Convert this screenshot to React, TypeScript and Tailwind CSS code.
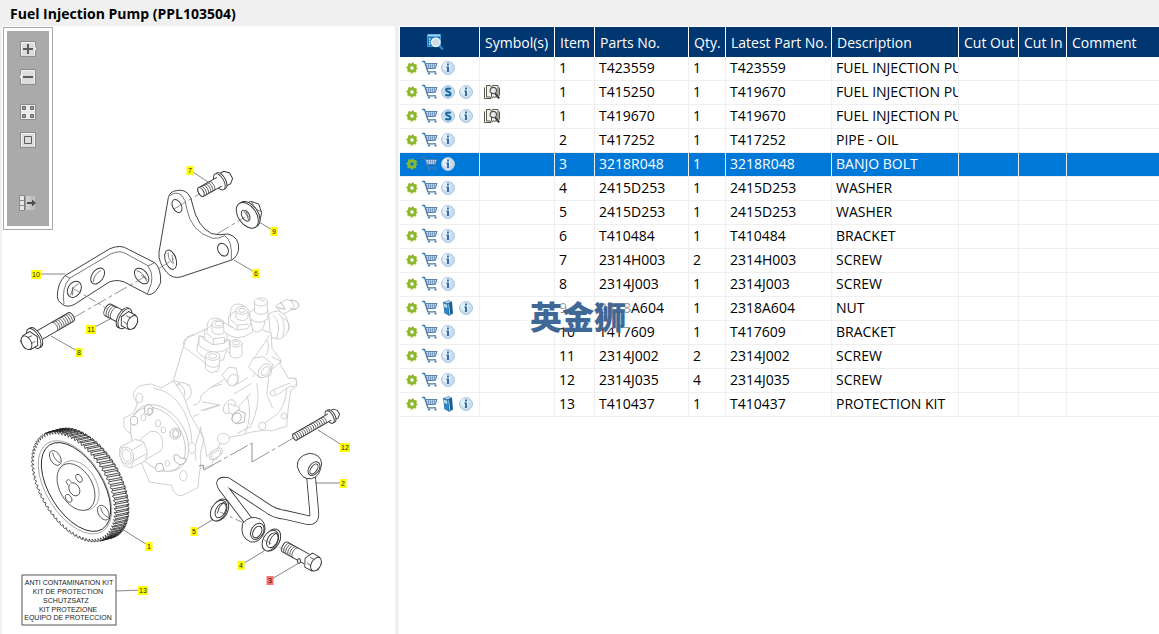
import { useState } from 'react'

interface Part {
  id: number
  item: string
  partNo: string
  qty: string
  latest: string
  description: string
  superseded?: boolean
  kit?: boolean
}

const parts: Part[] = [
  { id: 1, item: '1', partNo: 'T423559', qty: '1', latest: 'T423559', description: 'FUEL INJECTION PUMP' },
  { id: 2, item: '1', partNo: 'T415250', qty: '1', latest: 'T419670', description: 'FUEL INJECTION PUMP', superseded: true },
  { id: 3, item: '1', partNo: 'T419670', qty: '1', latest: 'T419670', description: 'FUEL INJECTION PUMP', superseded: true },
  { id: 4, item: '2', partNo: 'T417252', qty: '1', latest: 'T417252', description: 'PIPE - OIL' },
  { id: 5, item: '3', partNo: '3218R048', qty: '1', latest: '3218R048', description: 'BANJO BOLT' },
  { id: 6, item: '4', partNo: '2415D253', qty: '1', latest: '2415D253', description: 'WASHER' },
  { id: 7, item: '5', partNo: '2415D253', qty: '1', latest: '2415D253', description: 'WASHER' },
  { id: 8, item: '6', partNo: 'T410484', qty: '1', latest: 'T410484', description: 'BRACKET' },
  { id: 9, item: '7', partNo: '2314H003', qty: '2', latest: '2314H003', description: 'SCREW' },
  { id: 10, item: '8', partNo: '2314J003', qty: '1', latest: '2314J003', description: 'SCREW' },
  { id: 11, item: '9', partNo: '2318A604', qty: '1', latest: '2318A604', description: 'NUT', kit: true },
  { id: 12, item: '10', partNo: 'T417609', qty: '1', latest: 'T417609', description: 'BRACKET' },
  { id: 13, item: '11', partNo: '2314J002', qty: '2', latest: '2314J002', description: 'SCREW' },
  { id: 14, item: '12', partNo: '2314J035', qty: '4', latest: '2314J035', description: 'SCREW' },
  { id: 15, item: '13', partNo: 'T410437', qty: '1', latest: 'T410437', description: 'PROTECTION KIT', kit: true },
]

// [item, label centre x, y, leader line end x, y]
const callouts: [string, number, number, number, number][] = [
  ['7', 190, 170, 208, 182],
  ['9', 274, 231, 259, 222],
  ['6', 256, 273, 234, 260],
  ['10', 36, 274, 65, 274],
  ['8', 79, 352, 51, 336],
  ['11', 91, 329, 110, 319],
  ['1', 149, 546, 122, 529],
  ['12', 345, 447, 318, 430],
  ['2', 343, 483, 315, 483],
  ['5', 194, 531, 212, 520],
  ['4', 241, 565, 264, 551],
  ['3', 270, 580, 299, 563],
  ['13', 143, 590, 116, 591],
]

function GearIcon() {
  return (
    <svg width="16" height="16" viewBox="0 0 16 16" fill="none" stroke="#8bb92c">
      <circle cx="8" cy="8" r="3.2" strokeWidth="2.8" />
      <circle cx="8" cy="8" r="4.8" strokeWidth="1.6" strokeDasharray="2.2 1.57" strokeDashoffset="1" />
    </svg>
  )
}

function CartIcon() {
  return (
    <svg width="18" height="16" viewBox="0 0 18 16" fill="none" stroke="#4a78ad">
      <path d="M1 1.5h2.5l3.4 10.300H15" strokeWidth="1.3" />
      <path d="M4.500 3.500H16L14.300 8.500H6.200z" fill="#dce7f2" strokeWidth=".9" />
      <path d="M7.500 4v4.500M9.500 4v4.500M11.500 4v4.500M13.500 4v4.500M5 5.200h10.500M6 7h8.700" strokeWidth=".5" />
      <circle cx="8" cy="13.600" r="1.100" fill="#4a78ad" stroke="none" />
      <circle cx="14.500" cy="13.600" r="1.100" fill="#4a78ad" stroke="none" />
    </svg>
  )
}

function InfoIcon() {
  return (
    <svg width="16" height="16" viewBox="0 0 16 16">
      <circle cx="8" cy="8" r="6.5" fill="#c8dcee" stroke="#adc8e0" />
      <circle cx="6.5" cy="6.5" r="4" fill="#e4eff8" />
      <path d="M7 3.500h2v2H7zM6.300 6.600H9v5.400H7V7.800h-.7z" fill="#3c6ca6" />
    </svg>
  )
}

function SupersededIcon() {
  return (
    <svg width="16" height="16" viewBox="0 0 16 16">
      <circle cx="8" cy="8" r="6.5" fill="#c8dcee" stroke="#adc8e0" />
      <path
        d="M10.6 5.3C9.6 4.3 6 4 6 6.1c0 2 4.5 1.400 4.500 3.700 0 2.200-3.700 2-5 .7"
        fill="none"
        stroke="#17679f"
        strokeWidth="2"
      />
    </svg>
  )
}

function KitIcon() {
  return (
    <svg width="16" height="16" viewBox="0 0 16 16">
      <path d="M3 2.200 8.500.3l3.500 1.500 1 11.700L9.500 15.700 8 15z" fill="#125f9a" />
      <path d="M3.200 2.600 7.600 4 9 15.500 4.300 13.200z" fill="#2e86c1" />
      <path d="M4 3.800l3 .9.300 3.300-3-.9z" fill="#bfe0f3" />
      <path d="M3.600 2.100 8.500.7l2.800 1L7.800 3.400z" fill="#a9d5ee" />
      <path d="M8.600 4.300 9.900 14.800" stroke="#d8edf8" strokeWidth=".8" />
    </svg>
  )
}

function CatalogueIcon() {
  return (
    <svg width="16" height="16" viewBox="0 0 16 16" fill="none" stroke="#55534a">
      <path d="M2.500 1.500H6l1.500 1 1.500-1h5v11.500H9l-1.500 1-1.500-1H2.500z" fill="#f6f5ee" />
      <path d="M.5 3.500v11h6.500M15.500 3.500v8M7.500 3v10" />
      <circle cx="9.300" cy="6.500" r="3.200" fill="#e6ebef" strokeWidth="1.200" />
      <path d="m11.200 9.300 4 5.200" strokeWidth="2" stroke="#3a3932" />
    </svg>
  )
}

function SearchListIcon() {
  return (
    <svg width="17" height="16" viewBox="0 0 17 16" fill="none">
      <path d="M.5.5h13v12H.5z" fill="#1577b8" stroke="#3f9fd6" />
      <path d="M1 1.500h12" stroke="#9bd3f0" strokeWidth="2" />
      <path d="M2 5h1.500M2 7.500h1.500M2 10h1.500" stroke="#d7eefa" strokeWidth="1.500" />
      <path d="m11.500 11 4.500 4.500" stroke="#2f8bc7" strokeWidth="2.200" />
      <circle cx="8.800" cy="8.300" r="4.200" fill="#cfdbe4" stroke="#eef5fa" strokeWidth="1.300" />
    </svg>
  )
}

function IconButton({ label, children }: { label: string; children: React.ReactNode }) {
  return (
    <button type="button" aria-label={label} className="flex h-4 w-[18px] shrink-0 items-center justify-center">
      {children}
    </button>
  )
}

function ToolButton({ label, className = '', children }: { label: string; className?: string; children: React.ReactNode }) {
  return (
    <button type="button" aria-label={label} className={`flex h-4 w-5 items-center justify-center ${className}`}>
      <svg width="20" height="16" viewBox="0 0 20 16" fill="none">
        {children}
      </svg>
    </button>
  )
}

function Toolbar() {
  return (
    <div className="absolute top-px left-px border border-[#a8a8a8] bg-white p-[3px]">
      <div className="flex flex-col items-center gap-3 bg-[#aaaaaa] px-[11px] pt-[10px] pb-[15px]">
        <ToolButton label="Zoom in">
          <path d="M2.5.5h15v5l2 2.500-2 2v5.500h-15z" fill="#dcdcdc" stroke="#8c8c8c" />
          <path d="M3.500 14V1.500H16.500V14" stroke="#f2f2f2" />
          <path d="M5 8h10M10 3v10" stroke="#5c5c5c" strokeWidth="2" />
        </ToolButton>
        <ToolButton label="Zoom out">
          <path d="M2.500.5h15v15h-15v-5.500l-2-2 2-2.500z" fill="#dcdcdc" stroke="#8c8c8c" />
          <path d="M3.500 14V1.500H16.500V14" stroke="#f2f2f2" />
          <path d="M5 8h10" stroke="#5c5c5c" strokeWidth="2" />
        </ToolButton>
        <ToolButton label="Fit to window" className="mt-[7px]">
          <path d="M2.500.5h15v15h-15z" fill="#ececec" stroke="#8c8c8c" />
          <path d="M4.500 2.500h3v3h-3zM12.500 2.500h3v3h-3zM4.500 10.500h3v3h-3zM12.500 10.500h3v3h-3z" fill="#999" stroke="#6a6a6a" />
        </ToolButton>
        <ToolButton label="Actual size">
          <path d="M2.500.5h15v15h-15z" fill="#dcdcdc" stroke="#8c8c8c" />
          <path d="M3.500 14V1.500H16.500V14" stroke="#f2f2f2" />
          <path d="M6.500 4.500h7v7h-7z" stroke="#5c5c5c" />
        </ToolButton>
        <ToolButton label="Show list" className="mt-[35px]">
          <path d="M7 1h10v14H7z" fill="#bfbfbf" />
          <path d="M7 1h5v14H7z" fill="#cccccc" />
          <path d="M1.500.5h5v15h-5zM1.500 5.500h5M1.500 10.500h5" fill="#e6e6e6" stroke="#8c8c8c" />
          <path d="M7 1v14" stroke="#6a6a6a" />
          <path d="M9 8h6" stroke="#4c4c4c" strokeWidth="2" />
          <path d="M14 4.500 18 8l-4 3.500z" fill="#4c4c4c" />
        </ToolButton>
      </div>
    </div>
  )
}

interface BoltProps {
  x: number
  y: number
  angle: number
  length: number
  width: number
  threads: number
  head: number
  flange?: number
  far?: boolean
}

// Local x axis runs from the tip of the shank to the head
function Bolt({ x, y, angle, length, width, threads, head, flange = 0, far = false }: BoltProps) {
  const r = width / 2
  const shank = (
    <g key="shank">
      <path d={`M0 ${-r}H${length}V${r}H0A${r * 0.5} ${r} 0 0 1 0 ${-r}z`} stroke="none" />
      <path d={`M${length} ${-r}H0A${r * 0.5} ${r} 0 0 0 0 ${r}H${length}`} />
      {Array.from({ length: threads }).map((_, i) => (
        <path
          key={i}
          d={`M${(i + 1) * 2.4} ${-r}a${r * 0.5} ${r} 0 0 ${far ? 1 : 0} 0 ${width}`}
          fill="none"
          strokeWidth=".7"
        />
      ))}
      {far && <ellipse cx="0" cy="0" rx={r * 0.5} ry={r} />}
    </g>
  )
  const collar = flange > 0 && (
    <g key="collar">
      <ellipse cx={length + (far ? 2 : 0)} cy="0" rx={flange * 0.5} ry={flange} />
      <ellipse cx={length + (far ? 0 : 2)} cy="0" rx={flange * 0.5} ry={flange} />
    </g>
  )
  const h = head
  const cap = (
    <g key="cap" transform={`translate(${length + 2} 0)`}>
      <path d={`M0 ${-h}L${h} ${-h}L${h * 1.6} ${-h * 0.4}V${h * 0.5}L${h} ${h}H0L${-h * 0.5} 0z`} />
      {!far && <ellipse cx={h * 1.05} cy="0" rx={h * 0.58} ry={h * 0.92} />}
      <path d={`M0 ${-h * 0.4}L${h * 0.6} ${-h * 0.4}M0 ${h * 0.4}L${h * 0.6} ${h * 0.5}`} fill="none" strokeWidth=".7" />
    </g>
  )
  return (
    <g transform={`translate(${x} ${y}) rotate(${angle})`} fill="#fff" stroke="#333" strokeWidth=".9">
      {far ? [cap, collar, shank] : [shank, collar, cap]}
    </g>
  )
}

const TEETH = 76

// Point on the tilted gear rim; scale 1 is the tooth tip
function rim(t: number, scale: number, dx = 0, dy = 0): string {
  const a = 182 * scale * Math.cos(t)
  const b = 102 * scale * Math.sin(t)
  const c = Math.cos((60 * Math.PI) / 180)
  const s = Math.sin((60 * Math.PI) / 180)
  return `${(192 + dx + a * c - b * s).toFixed(1)} ${(230 + dy + a * s + b * c).toFixed(1)}`
}

function GearWheel() {
  const step = (2 * Math.PI) / TEETH
  const outline = (dx: number, dy: number) =>
    'M' +
    Array.from({ length: TEETH })
      .map((_, i) => `${rim(i * step, 0.95, dx, dy)}L${rim((i + 0.3) * step, 1, dx, dy)}L${rim((i + 0.7) * step, 1, dx, dy)}`)
      .join('L') +
    'z'
  const flanks = Array.from({ length: TEETH / 2 + 2 })
    .map((_, i) => i + TEETH / 2)
    .map((i) => `M${rim((i + 0.3) * step, 1)}L${rim((i + 0.5) * step, 1, 38, -10)}M${rim((i + 0.7) * step, 1)}L${rim((i + 0.9) * step, 1, 38, -10)}`)
    .join('')
  return (
    <g transform="translate(10 410) scale(.3333)" fill="#fff" stroke="#222" strokeWidth="2.2">
      <path d={outline(38, -10)} />
      <path d={outline(0, 0)} />
      <path d={flanks} strokeWidth="2.4" />
      <g strokeWidth="2">
        <ellipse cx="195" cy="232" rx="156" ry="86" transform="rotate(58 195 232)" stroke="#888" />
        <ellipse cx="198" cy="231" rx="149" ry="80" transform="rotate(58 198 231)" strokeWidth="2.6" />
        <ellipse cx="207" cy="226" rx="80" ry="52" transform="rotate(60 207 226)" stroke="#888" />
        <ellipse cx="198" cy="231" rx="76" ry="49" transform="rotate(60 198 231)" />
        <ellipse cx="136" cy="144" rx="24" ry="15" transform="rotate(60 136 144)" />
        <path d="M128 128q4 22 22 30" fill="none" />
        <ellipse cx="280" cy="308" rx="24" ry="15" transform="rotate(60 280 308)" />
        <path d="M272 292q4 22 22 30" fill="none" />
        <ellipse cx="207" cy="205" rx="13" ry="8" transform="rotate(60 207 205)" />
        <ellipse cx="176" cy="265" rx="13" ry="8" transform="rotate(60 176 265)" />
        <ellipse cx="193" cy="238" rx="21" ry="15" transform="rotate(60 193 238)" />
        <path d="M174 226l-6-12 8-6 10 10" />
      </g>
    </g>
  )
}

function PumpBody() {
  return (
    <g transform="translate(110 290) scale(.3333)" fill="#fff" stroke="#c6c6c6" strokeWidth="2.5">
      {/* rear outlet */}
      <path d="M476 72q35-22 52 8l10 30q-8 30-30 38l-26-6z" />
      <path d="M488 75q28 20 12 70M505 70q26 22 14 70M520 84l15 12 2 28" fill="none" />
      <path d="M496 48l34-20 16 6 8 22-36 16z" />
      <path d="M540 30l20 4 8 14-10 10-18-2M500 52l24 6M512 36l14 22" fill="none" stroke="#aaa" />
      {/* main casting */}
      <path d="M190 272L222 165q5-25 30-30l40-20 150 0 42 14 2 46 26 34-2 14 26 42 22 0 2 24-18 12-8 62-4 46-46 14-14-3-45 6-30 9-60 11-30 80-60 18-60-30-40-160z" />
      <path d="M222 170l100 78M222 165q-6-10 10-24l20-8M190 272l50 14M250 345q22 0 24-30l28-22 40-24M276 336l52 8-56 18M280 362l50-16M302 292l34-10" fill="none" />
      <path d="M484 200l30 14-36 30-8 70 18 40M488 300l60-24M496 318l54-36M530 296q-2 50-30 78l-40 28M440 280q14 60-18 130l-40 20M412 318q16 60-6 112" fill="none" />
      <path d="M370 290l44-28M372 312l52-32M386 350l36-40M430 260q20-30 6-60l44-66M470 150q12 20-2 46" fill="none" />
      <path d="M538 266q20-6 22 10 0 14-18 14" />
      <circle cx="522" cy="378" r="9" />
      <circle cx="457" cy="408" r="11" />
      <circle cx="488" cy="310" r="8" />
      {/* outlet valves */}
      <path d="M268 138l-8 44q30 40 80 28l20-60z" />
      <path d="M268 136q44 44 90 14v24q-46 30-92-8z" />
      <path d="M284 122v26l24 16 34-4 10-18-6-30-34-14z" />
      <path d="M288 128l22 18 34-4M310 146v18M344 142v18" fill="none" />
      <path d="M292 124q-6-38 22-40 28 0 32 22" fill="none" />
      <path d="M306 104v22q20 16 38 0v-22" />
      <ellipse cx="325" cy="102" rx="20" ry="12" />
      <ellipse cx="326" cy="101" rx="12" ry="7" />
      <path d="M340 96q44 38 88 4v26q-44 34-86 0z" />
      <path d="M356 78v26l24 16 32-4 12-18-6-26-34-14z" />
      <path d="M360 88l22 18 34-4M382 106v14" fill="none" />
      <path d="M362 84q-6-40 18-42 30 0 34 22" fill="none" />
      <path d="M378 62v22q20 16 36 0V62" />
      <ellipse cx="396" cy="61" rx="19" ry="12" />
      <ellipse cx="396" cy="61" rx="11" ry="6" />
      <path d="M422 90q4 40 20 36 22-6 22-32z" />
      <path d="M420 66v20q26 22 54 0V60q-26-20-54 6z" />
      <path d="M434 34v32q18 14 38 0V36" />
      <ellipse cx="453" cy="36" rx="20" ry="12" />
      <path d="M446 28l18 6" />
      {/* small connectors */}
      <path d="M286 200v36l16 12 24-6 4-40z" />
      <ellipse cx="308" cy="198" rx="21" ry="13" />
      <ellipse cx="308" cy="198" rx="12" ry="7" />
      <path d="M286 222q22 18 42 4M352 184q22 22 42 2" fill="none" />
      <path d="M360 160v38q18 14 36-2v-36" />
      <ellipse cx="378" cy="160" rx="18" ry="11" />
      <ellipse cx="378" cy="159" rx="10" ry="6" />
      <path d="M336 256l20-24 22 2 6 26 0 20-26 4z" />
      <ellipse cx="368" cy="270" rx="14" ry="18" transform="rotate(40 368 270)" />
      <path d="M416 232l14-28 30-4 28 22-6 34-32 8z" />
      <ellipse cx="464" cy="242" rx="16" ry="24" transform="rotate(40 464 242)" />
      <ellipse cx="466" cy="243" rx="9" ry="16" transform="rotate(40 466 243)" />
      <ellipse cx="358" cy="350" rx="15" ry="23" transform="rotate(35 358 350)" />
      <path d="M354 340l34 12v26l-30-8z" />
      <path d="M368 374l16-14 22 10-4 26-20 6-16-12z" stroke="#aaa" />
      <ellipse cx="380" cy="384" rx="13" ry="16" transform="rotate(30 380 384)" stroke="#aaa" />
      <circle cx="216" cy="306" r="28" />
      <ellipse cx="206" cy="308" rx="18" ry="24" />
      {/* mounting flange */}
      <path d="M70 318q0-24 26-32l28-4 30 12 36-22 30 44 22 60 40 70-10 40 0 40-6 40 -2 26-46 24q-24 6-34-30l-66-10L78 480 62 430Q36 420 42 384l28-14 12-28z" />
      <path d="M130 294q60 10 92 70 30 60 22 120M274 410l-20 62 4 40M250 380l18-8" fill="none" />
      <ellipse cx="88" cy="324" rx="10" ry="14" />
      <ellipse cx="220" cy="557" rx="11" ry="15" />
      <ellipse cx="246" cy="474" rx="11" ry="16" />
      <ellipse cx="340" cy="446" rx="18" ry="16" />
      <path d="M270 410q20 70 20 90l20-20" fill="none" />
      <ellipse cx="318" cy="492" rx="12" ry="24" transform="rotate(50 318 492)" />
      <ellipse cx="318" cy="494" rx="8" ry="18" transform="rotate(50 318 494)" />
      <ellipse cx="150" cy="444" rx="108" ry="76" transform="rotate(58 150 444)" />
      <ellipse cx="144" cy="448" rx="104" ry="72" transform="rotate(58 144 448)" />
      <ellipse cx="100" cy="382" rx="7" ry="11" />
      <ellipse cx="144" cy="400" rx="8" ry="11" />
      <ellipse cx="160" cy="420" rx="7" ry="9" />
      <ellipse cx="172" cy="520" rx="7" ry="9" />
      <g stroke="#aaa">
        <ellipse cx="116" cy="360" rx="13" ry="16" />
        <ellipse cx="120" cy="364" rx="7" ry="10" />
        <ellipse cx="72" cy="392" rx="11" ry="13" />
        <ellipse cx="196" cy="431" rx="16" ry="16" />
        <ellipse cx="197" cy="431" rx="9" ry="11" />
        <path d="M192 496q14-6 18 8l16 2q4 14-16 18-20-6-18-28zM140 522l16-2 6 20-18 6-8-10z" />
      </g>
      {/* drive shaft */}
      <path d="M92 446l30-22q30-4 36 30 2 28-14 34l-46 26z" />
      <path d="M30 472l46-24 26 8 10 32-6 24-42 22-20-6q-20-30-14-56z" />
      <path d="M64 482l38-24M72 512l40-22M30 472l34 10 8 30-10 20" fill="none" />
      <ellipse cx="50" cy="497" rx="20" ry="26" transform="rotate(-18 50 497)" />
      <ellipse cx="50" cy="497" rx="13" ry="19" transform="rotate(-18 50 497)" />
    </g>
  )
}

function Plates() {
  return (
    <g fill="#fff" stroke="#333" strokeWidth="2.8">
      <g transform="translate(140 155) scale(.3333)">
        <path d="M85 128Q90 108 110 107Q130 102 144 116Q155 128 158 150Q172 215 215 236Q240 242 264 237Q298 246 296 282Q292 306 275 315L122 366Q98 372 80 352Q54 322 57 292Z" />
        <path d="M90 122q18-14 34-2 14 14 16 40 12 70 78 90 18 2 36-8 24 14 20 72" fill="none" strokeWidth="2" />
        <ellipse cx="111" cy="153" rx="13" ry="21" transform="rotate(-28 111 153)" />
        <ellipse cx="249" cy="284" rx="15" ry="20" transform="rotate(-28 249 284)" />
        <ellipse cx="92" cy="314" rx="16" ry="30" transform="rotate(-18 92 314)" />
        <path d="M84 292q-2 16 12 32M96 292l12 14M96 300l4 28" strokeWidth="1.8" />
        {/* flange nut */}
        <path d="M306 152l26-13 24 8 9 26-6 26-12 12z" />
        <path d="M334 140l12 22 18 8M346 162l6 32" fill="none" strokeWidth="2" />
        <ellipse cx="327" cy="178" rx="43" ry="27" transform="rotate(55 327 178)" />
        <ellipse cx="322" cy="181" rx="43" ry="27" transform="rotate(55 322 181)" />
        <ellipse cx="317" cy="182" rx="18" ry="11" transform="rotate(60 317 182)" />
        <path d="M312 168q10 12 14 28M318 170l8 18" strokeWidth="2" />
      </g>
      <g transform="translate(0 230) scale(.3333)">
        <path d="M172 200Q172 160 195 137L330 56Q362 42 385 58L464 98Q484 115 482 158Q466 195 445 194L388 164Q358 144 328 156L222 224Q200 234 186 222Q172 214 172 200Z" />
        <path d="M192 222q-8-50 18-78l122-72q26-12 44-2l66 36q18 20 12 54l-12 32M195 137l15 8M464 98l-20 10" fill="none" strokeWidth="2" />
        <ellipse cx="223" cy="178" rx="19" ry="26" transform="rotate(32 223 178)" />
        <path d="M212 196q4-24 24-36M218 170v26" strokeWidth="2" />
        <ellipse cx="293" cy="138" rx="17" ry="27" transform="rotate(35 293 138)" />
        <path d="M280 156q2-24 22-34" strokeWidth="2" />
        <ellipse cx="425" cy="138" rx="17" ry="27" transform="rotate(-40 425 138)" />
        <path d="M410 122q20 4 30 32M424 136l18 12" strokeWidth="2" />
      </g>
    </g>
  )
}

function OilPipe() {
  const tube = 'M208 366L130 264Q112 240 142 246L270 330Q290 342 312 344L382 360Q404 364 403 340L393 228'
  return (
    <g transform="translate(180 400) scale(.3333)" fill="#fff" stroke="#333" strokeWidth="2.8">
      <path d={tube} fill="none" strokeWidth="29" />
      <path d={tube} fill="none" stroke="#fff" strokeWidth="24" />
      <path d="M352 200q-2-32 36-40 34 2 37 30-4 40-30 46-30 6-43-36z" />
      <ellipse cx="402" cy="206" rx="15" ry="23" transform="rotate(35 402 206)" />
      <ellipse cx="402" cy="207" rx="9" ry="17" transform="rotate(35 402 207)" />
      <path d="M188 370q24-28 54-12 16 10 12 38-14 34-42 30-34-14-24-56z" />
      <ellipse cx="232" cy="394" rx="18" ry="26" transform="rotate(30 232 394)" />
      <ellipse cx="232" cy="396" rx="12" ry="19" transform="rotate(30 232 396)" />
      {/* washers */}
      <ellipse cx="120" cy="330" rx="23" ry="35" transform="rotate(28 120 330)" />
      <ellipse cx="116" cy="332" rx="22" ry="33" transform="rotate(28 116 332)" />
      <ellipse cx="122" cy="331" rx="14" ry="24" transform="rotate(28 122 331)" />
      <path d="M112 340q2-20 20-34" fill="none" />
      <ellipse cx="276" cy="420" rx="23" ry="35" transform="rotate(28 276 420)" />
      <ellipse cx="271" cy="422" rx="22" ry="33" transform="rotate(28 271 422)" />
      <ellipse cx="277" cy="421" rx="15" ry="24" transform="rotate(28 277 421)" />
      <path d="M268 434q0-22 20-34" fill="none" />
    </g>
  )
}

function Diagram({ highlighted }: { highlighted: string }) {
  return (
    <svg viewBox="2 26 393 608" className="block w-full font-['Liberation_Sans',sans-serif]" role="img" aria-label="Exploded view">
      <PumpBody />
      <GearWheel />
      <Plates />
      <OilPipe />
      <Bolt x={201} y={192} angle={-29} length={21} width={10} threads={5} head={7} flange={9} far />
      <Bolt x={295} y={437} angle={-30} length={40} width={7} threads={14} head={5} flange={7} far />
      <Bolt x={71} y={317} angle={150} length={41} width={10} threads={8} head={8} flange={11} />
      <Bolt x={108} y={310} angle={27} length={17} width={13} threads={3} head={8} flange={11} />
      <Bolt x={285} y={547} angle={29} length={25} width={11} threads={5} head={8} />
      <ellipse cx="299" cy="561" rx="1.5" ry="2.5" fill="#fff" stroke="#333" />
      <g fill="none" stroke="#777" strokeWidth=".8">
        <path d="M174 209l25-15M217 234l28-17M158 269l16-10M73 318l73-42" strokeDasharray="14 3 4 3" />
        <path d="M74 289l34 20M220 512l26 12M264 540l21 10" strokeDasharray="8 3 3 3" />
        <path d="M199 466l4-1 1 5M252 443v19" />
        <path d="M204 470l48-27M252 462l43-25" strokeDasharray="20 3 4 3" />
      </g>
      <g stroke="#666" strokeWidth=".8">
        {callouts.map(([item, x, y, ex, ey]) => (
          <line key={item} x1={x} y1={y} x2={ex} y2={ey} />
        ))}
      </g>
      {callouts.map(([item, x, y]) => {
        const width = item.length > 1 ? 10 : 7
        return (
          <g key={item}>
            <rect x={x - width / 2} y={y - 4} width={width} height="9" fill={item === highlighted ? '#f47373' : '#ffff00'} />
            <text x={x} y={y + 3} fontSize="7" textAnchor="middle" fill="#222">
              {item}
            </text>
          </g>
        )
      })}
      <rect x="22" y="575" width="94" height="50" fill="#fff" stroke="#555" strokeWidth="1" />
      <g fontSize="7" fill="#222" textAnchor="middle">
        <text x="69" y="585">ANTI CONTAMINATION KIT</text>
        <text x="68" y="594">KIT DE PROTECTION</text>
        <text x="66" y="603">SCHUTZSATZ</text>
        <text x="68" y="612">KIT PROTEZIONE</text>
        <text x="68" y="620">EQUIPO DE PROTECCION</text>
      </g>
    </svg>
  )
}

const headers = ['Symbol(s)', 'Item', 'Parts No.', 'Qty.', 'Latest Part No.', 'Description', 'Cut Out', 'Cut In', 'Comment']

export default function App() {
  const [selected, setSelected] = useState(5)
  const selectedItem = parts.find((part) => part.id === selected)?.item ?? ''

  return (
    <div className="flex min-h-screen flex-col bg-white font-['Open_Sans','Noto_Sans',sans-serif] text-sm text-black">
      <header className="bg-[#f0f0f0] pt-0.5 pl-[10px]">
        <h1 className="text-sm leading-6 font-bold">Fuel Injection Pump (PPL103504)</h1>
      </header>
      <main className="flex flex-1">
        <section className="relative w-[399px] shrink-0 border-r-4 border-l-2 border-[#f0f0f0]">
          <Diagram highlighted={selectedItem} />
          <Toolbar />
        </section>

        <section className="relative min-w-0 flex-1 overflow-hidden pt-px pl-px">
          <table className="w-full table-fixed border-separate border-spacing-0 whitespace-nowrap">
            <colgroup>
              <col className="w-20" />
              <col className="w-[75px]" />
              <col className="w-10" />
              <col className="w-[94px]" />
              <col className="w-[37px]" />
              <col className="w-[106px]" />
              <col className="w-[127px]" />
              <col className="w-[60px]" />
              <col className="w-12" />
              <col />
            </colgroup>
            <thead>
              <tr className="h-[30px] bg-[#003770] text-left text-white">
                <th className="border-r border-white pl-[27px]">
                  <button type="button" aria-label="Search parts" className="block">
                    <SearchListIcon />
                  </button>
                </th>
                {headers.map((header) => (
                  <th key={header} className="border-r border-white p-0 pt-0.5 pl-[5px] font-normal last:border-r-0">
                    {header}
                  </th>
                ))}
              </tr>
            </thead>
            <tbody>
              {parts.map((part) => {
                const isSelected = part.id === selected
                const cell = 'h-6 overflow-hidden border-r border-b border-[#efefef] p-0 pb-0.5 pl-1 leading-[21px] last:border-r-0'
                return (
                  <tr
                    key={part.id}
                    onClick={() => setSelected(part.id)}
                    className={isSelected ? 'bg-[#0078d7] text-white' : 'bg-white'}
                  >
                    <td className="h-6 border-r border-b border-[#efefef] p-0 pb-0.5 pl-[3px]">
                      <div className="flex items-center">
                        <IconButton label="Options"><GearIcon /></IconButton>
                        <IconButton label="Add to cart"><CartIcon /></IconButton>
                        {part.superseded && <IconButton label="Supersession"><SupersededIcon /></IconButton>}
                        {part.kit && <IconButton label="Kit contents"><KitIcon /></IconButton>}
                        <IconButton label="Information"><InfoIcon /></IconButton>
                      </div>
                    </td>
                    <td className={cell}>{part.superseded && <CatalogueIcon />}</td>
                    <td className={cell}>{part.item}</td>
                    <td className={cell}>{part.partNo}</td>
                    <td className={cell}>{part.qty}</td>
                    <td className={cell}>{part.latest}</td>
                    <td className={cell}>{part.description}</td>
                    <td className={cell} />
                    <td className={cell} />
                    <td className={cell} />
                  </tr>
                )
              })}
            </tbody>
          </table>
          <div className="pointer-events-none absolute top-[276px] left-[127px] bg-white/60 px-1 font-['Noto_Sans_CJK_SC',sans-serif] text-[32px] leading-[26px] font-black text-[#3f6896]">
            英金狮
          </div>
        </section>
      </main>
    </div>
  )
}
